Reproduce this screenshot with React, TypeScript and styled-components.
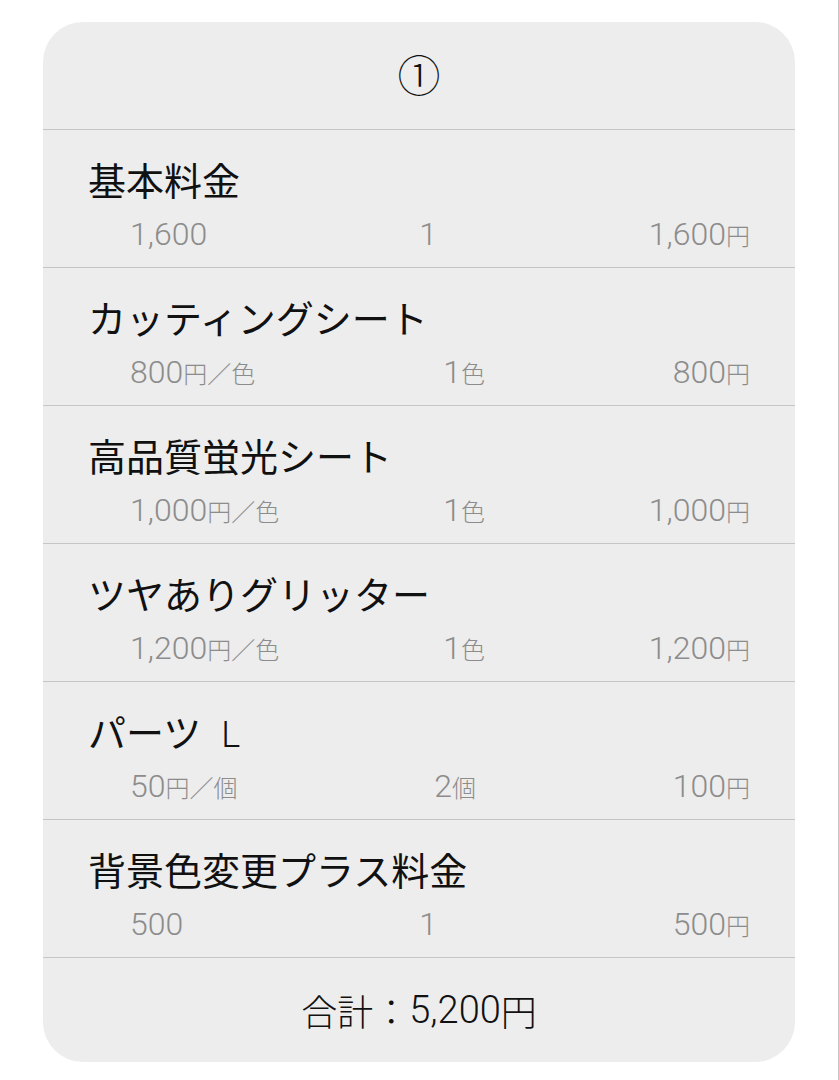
import { FC } from "react";
import styled, { createGlobalStyle } from "styled-components";

type Item = {
  name: string;
  size?: string;
  unit: string;
  unitSuffix?: string;
  qty: string;
  qtySuffix?: string;
  price: string;
};

const items: Item[] = [
  { name: "基本料金", unit: "1,600", qty: "1", price: "1,600" },
  { name: "カッティングシート", unit: "800", unitSuffix: "円／色", qty: "1", qtySuffix: "色", price: "800" },
  { name: "高品質蛍光シート", unit: "1,000", unitSuffix: "円／色", qty: "1", qtySuffix: "色", price: "1,000" },
  { name: "ツヤありグリッター", unit: "1,200", unitSuffix: "円／色", qty: "1", qtySuffix: "色", price: "1,200" },
  { name: "パーツ", size: "L", unit: "50", unitSuffix: "円／個", qty: "2", qtySuffix: "個", price: "100" },
  { name: "背景色変更プラス料金", unit: "500", qty: "1", price: "500" },
];

const GlobalStyle = createGlobalStyle`
  html, body {
    margin: 0;
    padding: 0;
    background: #ffffff;
  }
  body {
    font-family: "Noto Sans CJK JP", "Noto Sans", sans-serif;
    color: #111111;
  }
`;

const App: FC = () => {
  return (
    <>
      <GlobalStyle />
      <Page>
        <Card>
          <Header>①</Header>
          {items.map((item) => (
            <Row key={item.name}>
              <Title>
                {item.name}
                {item.size && <Size>{item.size}</Size>}
              </Title>
              <Detail>
                <Value>
                  {item.unit}
                  {item.unitSuffix && <Small>{item.unitSuffix}</Small>}
                </Value>
                <Value>
                  {item.qty}
                  {item.qtySuffix && <Small>{item.qtySuffix}</Small>}
                </Value>
                <Value>
                  {item.price}
                  <Small>円</Small>
                </Value>
              </Detail>
            </Row>
          ))}
          <Footer>
            合計：<Num>5,200</Num>円
          </Footer>
        </Card>
      </Page>
    </>
  );
};

export default App;

const Page = styled.div`
  box-sizing: border-box;
  min-height: 100vh;
  width: 839px;
  padding-top: 22px;
  border-right: 1px solid #c4c4c4;
`;

const Card = styled.div`
  width: 752px;
  margin: 0 0 0 43px;
  background: #ededed;
  border-radius: 40px;
  overflow: hidden;
`;

const Header = styled.div`
  box-sizing: border-box;
  height: 108px;
  padding-bottom: 6px;
  display: flex;
  align-items: center;
  justify-content: center;
  font-size: 43px;
  font-weight: 300;
  color: #111;
  border-bottom: 1px solid #c6c6c6;
`;

const Row = styled.div`
  box-sizing: border-box;
  height: 138px;
  padding: 24px 45px 13px 45px;
  border-bottom: 1px solid #c6c6c6;
`;

const Title = styled.div`
  height: 50px;
  font-size: 38px;
  line-height: 50px;
  font-weight: 400;
  color: #111;
  white-space: nowrap;
`;

const Size = styled.span`
  font-family: Roboto, "Noto Sans", sans-serif;
  font-weight: 300;
  font-size: 36px;
  line-height: 1;
  margin-left: 20px;
`;

const Detail = styled.div`
  display: flex;
  justify-content: space-between;
  align-items: baseline;
  margin-top: 10px;
  padding-left: 42px;
  height: 40px;
  line-height: 40px;
  color: #8c8c8c;
`;

const Value = styled.span`
  font-family: Roboto, "Noto Sans CJK JP", sans-serif;
  font-size: 32px;
  font-weight: 300;
  white-space: nowrap;
`;

const Small = styled.span`
  font-family: "Noto Sans CJK JP", sans-serif;
  font-size: 24px;
  font-weight: 300;
`;

const Footer = styled.div`
  height: 104px;
  display: flex;
  align-items: center;
  justify-content: center;
  font-size: 36px;
  font-weight: 300;
  color: #111;
`;

const Num = styled.span`
  font-family: Roboto, "Noto Sans CJK JP", sans-serif;
  font-size: 38px;
  font-weight: 300;
`;
